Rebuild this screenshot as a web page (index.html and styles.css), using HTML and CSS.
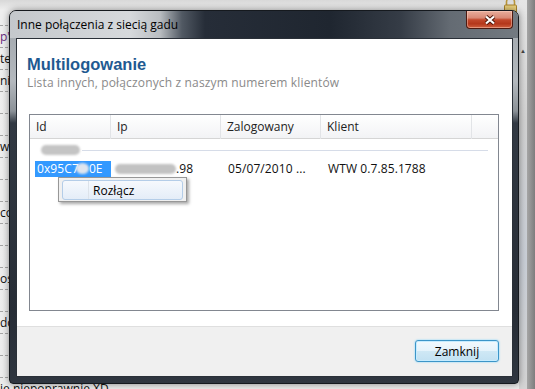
FILE: index.html
```html
<!DOCTYPE html>
<html lang="pl">
<head>
<meta charset="UTF-8">
<meta name="viewport" content="width=device-width, initial-scale=1.0">
<title>Multilogowanie</title>
<link rel="stylesheet" href="styles.css">
</head>
<body>
<div class="desk">
  <div class="feed">
    <div class="feed-row"></div>
    <div class="feed-row tag">p'</div>
    <div class="feed-row">tez</div>
    <div class="feed-row">nie</div>
    <div class="feed-row"></div>
    <div class="feed-row"></div>
    <div class="feed-row">wow</div>
    <div class="feed-row"></div>
    <div class="feed-row"></div>
    <div class="feed-row">co</div>
    <div class="feed-row"></div>
    <div class="feed-row"></div>
    <div class="feed-row">ostatnio</div>
    <div class="feed-row"></div>
    <div class="feed-row">dobra</div>
    <div class="feed-row"></div>
    <div class="feed-row"></div>
    <div class="feed-row">ie niepoprawnie XD</div>
  </div>
  <div class="side">
    <div class="track"><span class="arrow">&#9650;</span></div>
    <div class="edge"></div>
  </div>
  <svg class="lock" width="15" height="18" viewBox="0 0 15 18">
    <path d="M3.5 9 V6 a4 4 0 0 1 8 0 V9" fill="none" stroke="#b8953a" stroke-width="1.6"/>
    <rect x="1.5" y="9" width="12" height="8" rx="1" fill="#e9cf7a" stroke="#a8822c"/>
  </svg>
</div>

<div class="dialog">
  <div class="titlebar">
    <span class="title">Inne połączenia z siecią gadu</span>
    <button class="close">
      <svg width="12" height="10" viewBox="0 0 12 10">
        <path d="M2 1.5 L10 8.5 M10 1.5 L2 8.5" stroke="#4a1509" stroke-width="4"/>
        <path d="M2 1.5 L10 8.5 M10 1.5 L2 8.5" stroke="#fff" stroke-width="2.2"/>
      </svg>
    </button>
  </div>
  <div class="client">
    <div class="main">
      <h1>Multilogowanie</h1>
      <p class="sub">Lista innych, połączonych z naszym numerem klientów</p>
      <div class="list">
        <div class="list-head cols">
          <span>Id</span>
          <span>Ip</span>
          <span>Zalogowany</span>
          <span>Klient</span>
          <span></span>
        </div>
        <div class="group">
          <span class="gblur"></span>
          <span class="rule"></span>
        </div>
        <div class="item cols">
          <span class="c1"><span class="sel">0x95C7<span class="smudge"></span>0E</span></span>
          <span class="c2"><span class="ipblur"></span>.98</span>
          <span>05/07/2010 ...</span>
          <span>WTW 0.7.85.1788</span>
          <span></span>
        </div>
      </div>
    </div>
    <div class="footer">
      <button class="btn">Zamknij</button>
    </div>
  </div>
</div>

<div class="menu">
  <div class="menu-item"><span class="gutter"></span><span class="label">Rozłącz</span></div>
</div>
</body>
</html>
```

FILE: styles.css
```css
body {
  margin: 0;
  width: 535px;
  height: 389px;
  overflow: hidden;
  position: relative;
  font-family: "Open Sans", sans-serif;
  font-size: 12px;
  background: #e9e9e9;
}
.desk {
  display: flex;
  height: 389px;
}
.feed {
  flex: 1;
  padding-top: 4px;
  background: linear-gradient(to bottom, #d8d8d8 0, #eeeeee 10px, #ececec 100%);
}
.feed-row {
  height: 21px;
  line-height: 21px;
  border-bottom: 1px dashed #a4a4a4;
  white-space: nowrap;
  color: #111;
}
.feed-row.tag {
  color: #6b2c7d;
}
.side {
  width: 16px;
  display: flex;
}
.track {
  width: 8px;
  background: linear-gradient(to bottom, #e6e6e6 0, #d2d2d2 120px, #c9ced6 260px, #d4d4d4 100%);
  text-align: center;
  padding-top: 40px;
  box-sizing: border-box;
}
.arrow {
  font-size: 6px;
  color: #444;
}
.edge {
  width: 8px;
  background: linear-gradient(to right, #a5a5a5, #7d7d7d);
}
.lock {
  position: absolute;
  left: 503px;
  top: -4px;
}

/* okno dialogu */
.dialog {
  position: absolute;
  left: 9px;
  top: 10px;
  width: 510px;
  height: 374px;
  box-sizing: border-box;
  border: 1px solid #15191e;
  border-radius: 7px 7px 4px 4px;
  background: linear-gradient(to bottom, #9ea4aa 0, #b4b9be 70px, #8c9298 100px, #323943 112px, #272d36 300px, #2f3640 100%);
  box-shadow: 0 0 7px rgba(0, 0, 0, 0.45);
  display: flex;
  flex-direction: column;
  overflow: hidden;
}
.titlebar {
  height: 27px;
  flex: none;
  display: flex;
  align-items: flex-start;
  justify-content: space-between;
  padding: 0 5px 0 7px;
  background: linear-gradient(to right, #c4c8cc 0, #d6d9dc 120px, #b9bdc1 150px, #515963 172px, #262d38 195px, #1f2630 320px, #353c46 390px, #646b73 440px, #737a81 100%);
}
.title {
  line-height: 27px;
  color: #000;
}
.close {
  width: 47px;
  height: 18px;
  padding: 0;
  border: 1px solid #4d1a10;
  border-top: none;
  border-radius: 0 0 4px 4px;
  background: linear-gradient(#e8ad9c 0, #d98a76 40%, #c2482c 52%, #b4371b 75%, #d0603f 100%);
  box-shadow: inset 0 0 0 1px rgba(255, 215, 200, 0.45);
  display: flex;
  align-items: center;
  justify-content: center;
}
.client {
  flex: 1;
  margin: 0 5px 6px 6px;
  border: 1px solid #2a3038;
  background: #fff;
  display: flex;
  flex-direction: column;
}
.main {
  flex: 1;
  padding: 0 13px 0 10px;
}
h1 {
  margin: 15px 0 0;
  font: bold 16.5px/20px "Liberation Sans", sans-serif;
  color: #1f5a91;
}
.sub {
  margin: 1px 0 0;
  line-height: 16px;
  letter-spacing: 0.15px;
  color: #8a8a8a;
}
.list {
  margin: 23px 0 0 2px;
  height: 197px;
  box-sizing: border-box;
  border: 1px solid #828790;
}
.cols {
  display: grid;
  grid-template-columns: 81px 110px 100px 151px 1fr;
}
.list-head {
  height: 24px;
  box-sizing: border-box;
  border-bottom: 1px solid #d5d5d5;
  background: linear-gradient(#ffffff, #f2f3f5);
}
.list-head span {
  padding-left: 6px;
  line-height: 24px;
  border-right: 1px solid #e2e4e7;
  color: #222;
}
.list-head span:last-child {
  border-right: none;
}
.group {
  height: 22px;
  display: flex;
  align-items: center;
  gap: 2px;
  padding: 0 10px 0 11px;
}
.gblur {
  width: 39px;
  height: 10px;
  border-radius: 5px;
  background: #c4c4c4;
  filter: blur(1px);
}
.rule {
  flex: 1;
  height: 1px;
  background: #d6dce8;
}
.item {
  height: 17px;
  line-height: 16px;
  color: #111;
}
.item > span {
  padding-left: 7px;
  white-space: nowrap;
  letter-spacing: 0.1px;
}
.item .c1 {
  padding-left: 5px;
}
.item .c2 {
  padding-left: 4px;
}
.sel {
  display: block;
  height: 16px;
  padding-left: 2px;
  background: #3399ff;
  color: #fff;
}
.smudge {
  display: inline-block;
  width: 13px;
  height: 11px;
  margin-left: -3px;
  vertical-align: -1px;
  border-radius: 50%;
  background: #dfe5ee;
  filter: blur(1.3px);
}
.ipblur {
  display: inline-block;
  width: 61px;
  height: 10px;
  vertical-align: -1px;
  border-radius: 5px;
  background: #c2c2c2;
  filter: blur(1.2px);
}
.footer {
  height: 50px;
  box-sizing: border-box;
  border-top: 1px solid #dfdfdf;
  background: #f0f0f0;
  display: flex;
  justify-content: flex-end;
  align-items: flex-start;
  padding: 13px 13px 0 0;
}
.btn {
  width: 84px;
  height: 22px;
  padding: 0;
  border: 1px solid #3c95c8;
  border-radius: 3px;
  background: linear-gradient(#f2f9fd 0, #e5f3fb 50%, #cfe8f5 51%, #c2e1f2 100%);
  box-shadow: inset 0 0 0 1px #c6ecff, 0 0 2px #6fd0ff;
  font: 12px "Open Sans", sans-serif;
  color: #000;
}

/* menu kontekstowe */
.menu {
  position: absolute;
  left: 58px;
  top: 177px;
  width: 129px;
  height: 25px;
  box-sizing: border-box;
  padding: 2px 3px 1px 3px;
  border: 1px solid #979797;
  background: #f0f0f0;
  box-shadow: 2px 2px 3px rgba(0, 0, 0, 0.35);
}
.menu-item {
  height: 20px;
  box-sizing: border-box;
  border: 1px solid #b4cde8;
  border-radius: 3px;
  background: linear-gradient(#f6f9fd, #e4edf8);
  display: flex;
  align-items: center;
}
.gutter {
  width: 25px;
  align-self: stretch;
  border-right: 1px solid #dde3ea;
}
.label {
  padding-left: 4px;
  color: #000;
}
```
